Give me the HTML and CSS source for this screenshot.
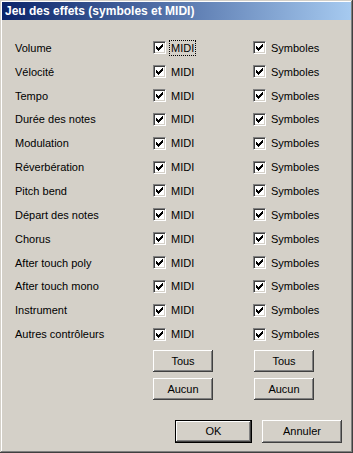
FILE: index.html
```html
<!DOCTYPE html>
<html lang="fr">
<head>
  <meta charset="UTF-8">
  <title>Jeu des effets</title>
  <link rel="stylesheet" href="styles.css">
</head>
<body>

<div class="window">
  <div class="titlebar">Jeu des effets (symboles et MIDI)</div>

  <div class="effects" id="effects"></div>

  <div class="bulk">
    <div class="bulk-col">
      <button class="btn">Tous</button>
      <button class="btn">Aucun</button>
    </div>
    <div class="bulk-col second">
      <button class="btn">Tous</button>
      <button class="btn">Aucun</button>
    </div>
  </div>

  <div class="footer">
    <button class="btn ok default">OK</button>
    <button class="btn cancel">Annuler</button>
  </div>
</div>

<script>
const effects = [
  'Volume', 'Vélocité', 'Tempo', 'Durée des notes', 'Modulation',
  'Réverbération', 'Pitch bend', 'Départ des notes', 'Chorus',
  'After touch poly', 'After touch mono', 'Instrument', 'Autres contrôleurs'
];

const checkSvg = '<svg width="7" height="7" viewBox="0 0 7 7" shape-rendering="crispEdges">' +
  '<path d="M0 2h1v3H0zM1 3h1v3H1zM2 4h1v3H2zM3 3h1v3H3zM4 2h1v3H4zM5 1h1v3H5zM6 0h1v3H6z" fill="#000"/></svg>';

function makeCheck(text, focused) {
  const label = document.createElement('label');
  label.className = 'check';
  label.innerHTML = '<span class="box">' + checkSvg + '</span>' +
    '<span class="check-text' + (focused ? ' focus' : '') + '">' + text + '</span>';
  return label;
}

const list = document.getElementById('effects');
effects.forEach((name, i) => {
  const label = document.createElement('div');
  label.className = 'effect-name';
  label.innerText = name;
  list.appendChild(label);
  list.appendChild(makeCheck('MIDI', i === 0));
  list.appendChild(makeCheck('Symboles', false));
});
</script>

</body>
</html>
```

FILE: styles.css
```css
body {
  margin: 0;
  font-family: "Liberation Sans", Arial, sans-serif;
  font-size: 11px;
  color: #000;
}

.window {
  width: 353px;
  height: 453px;
  box-sizing: border-box;
  padding: 2px;
  background-color: #d4d0c8;
  box-shadow: inset -1px -1px #404040, inset 1px 1px #d4d0c8,
              inset -2px -2px #808080, inset 2px 2px #fff;
}

.titlebar {
  height: 18px;
  line-height: 18px;
  padding-left: 3px;
  background: linear-gradient(to right, #0a246a, #a6caf0);
  color: #fff;
  font-weight: bold;
  font-size: 12px;
}

.effects {
  display: grid;
  grid-template-columns: 138px 100px 1fr;
  grid-auto-rows: 23.85px;
  align-items: center;
  padding: 16px 0 0 13px;
}

.check {
  display: flex;
  align-items: center;
}

.box {
  width: 13px;
  height: 13px;
  box-sizing: border-box;
  flex: none;
  border: 1px solid;
  border-color: #808080 #fff #fff #808080;
  box-shadow: inset 1px 1px #404040, inset -1px -1px #d4d0c8;
  background-color: #fff;
  padding: 2px;
}

.box svg {
  display: block;
}

.check-text {
  margin-left: 3px;
  padding: 1px;
  border: 1px dotted transparent;
}

.check-text.focus {
  border-color: #000;
}

.bulk {
  display: grid;
  grid-template-columns: 138px 100px 1fr;
  padding-left: 13px;
  margin-top: 4px;
}

.bulk-col {
  grid-column-start: 2;
  display: flex;
  flex-direction: column;
  gap: 6px;
}

.bulk-col.second {
  grid-column-start: 3;
  padding-left: 1px;
}

.btn {
  width: 60px;
  height: 22px;
  padding: 0;
  border: none;
  background-color: #d4d0c8;
  font-family: "Liberation Sans", Arial, sans-serif;
  font-size: 11px;
  color: #000;
  box-shadow: inset -1px -1px #404040, inset 1px 1px #fff,
              inset -2px -2px #808080, inset 2px 2px #d4d0c8;
}

.footer {
  display: flex;
  justify-content: flex-end;
  gap: 10px;
  margin-top: 20px;
  padding-right: 9px;
}

.btn.ok {
  width: 77px;
  height: 23px;
}

.btn.cancel {
  width: 80px;
  height: 23px;
}

.btn.default {
  border: 1px solid #000;
}
```
